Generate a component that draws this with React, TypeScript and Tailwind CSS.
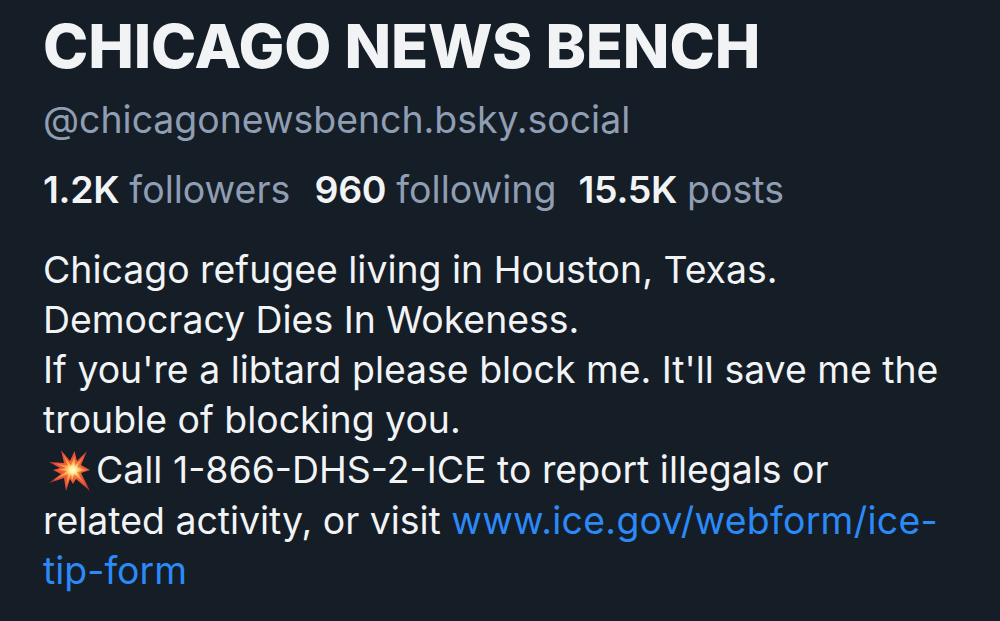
const stats = [
  { value: '1.2K', label: 'followers', className: 'w-[271.5px]' },
  { value: '960', label: 'following', className: 'w-[264px]' },
  { value: '15.5K', label: 'posts', className: 'w-[210px]' },
];

export default function App() {
  return (
    <main className="h-[621px] overflow-hidden bg-[#151d26] pl-[43px] pt-[14px] font-['Inter',sans-serif] text-[#f1f3f5]">
      <h1 className="whitespace-nowrap text-[61px] font-extrabold leading-[65px] tracking-[-0.13px]">
        CHICAGO NEWS BENCH
      </h1>
      <p className="mt-[16px] whitespace-nowrap text-[37.4px] leading-[50px] text-[#909eb4]">
        @chicagonewsbench.bsky.social
      </p>
      <Stats />
      <Bio />
    </main>
  );
}

function Stats() {
  return (
    <dl className="mt-[20px] flex whitespace-nowrap text-[37.5px] leading-[50px]">
      {stats.map((stat) => (
        <div key={stat.label} className={`flex shrink-0 gap-[10px] ${stat.className}`}>
          <dt className="font-semibold tracking-[-0.3px]">{stat.value}</dt>
          <dd className="text-[#909eb4]">{stat.label}</dd>
        </div>
      ))}
    </dl>
  );
}

function Bio() {
  return (
    <div className="mt-[29.6px] whitespace-nowrap text-[37.4px] leading-[50.2px]">
      <p>Chicago refugee living in Houston, Texas.</p>
      <p>Democracy Dies In Wokeness.</p>
      <p>If you're a libtard please block me. It'll save me the</p>
      <p>trouble of blocking you.</p>
      <p className="flex items-center">
        <CollisionIcon />
        <span>Call 1-866-DHS-2-ICE to report illegals or</span>
      </p>
      <p>
        related activity, or visit <a className="tracking-[0.28px] text-[#2b8af8]">www.ice.gov/webform/ice-</a>
      </p>
      <p>
        <a className="text-[#2b8af8]">tip-form</a>
      </p>
    </div>
  );
}

function CollisionIcon() {
  return (
    <svg className="ml-[5px] mr-[6px] h-[42px] w-[42px] shrink-0" viewBox="0 0 42 42">
      <defs>
        <radialGradient id="flame" gradientUnits="userSpaceOnUse" cx="25" cy="20" r="24">
          <stop offset="0.1" stopColor="#ff9d48" />
          <stop offset="0.45" stopColor="#ea5530" />
          <stop offset="0.75" stopColor="#e2503a" />
          <stop offset="1" stopColor="#b93325" />
        </radialGradient>
        <radialGradient id="core" gradientUnits="userSpaceOnUse" cx="25" cy="20" r="18">
          <stop offset="0" stopColor="#fffde0" />
          <stop offset="0.18" stopColor="#ffef9a" />
          <stop offset="0.45" stopColor="#ffa84e" />
          <stop offset="1" stopColor="#f0704a" />
        </radialGradient>
      </defs>
      <path
        fill="url(#flame)"
        d="M13 0L22 11L26.5 1L29 11L39 1L33 15L42 20L33 23L42 41L28 29L25 34L22 29L18 41L16 28L1 33L13 24L5 20L12 18L1 12L16 13Z"
      />
      <path
        fill="url(#core)"
        d="M15 4L23 16L26.5 6L27 16L36 6L29 17L39 20L29 22L36 33L26 24L24 31L23 24L18 36L20 24L6 30L19 21L9 20L18 18L6 13L20 16Z"
      />
    </svg>
  );
}
